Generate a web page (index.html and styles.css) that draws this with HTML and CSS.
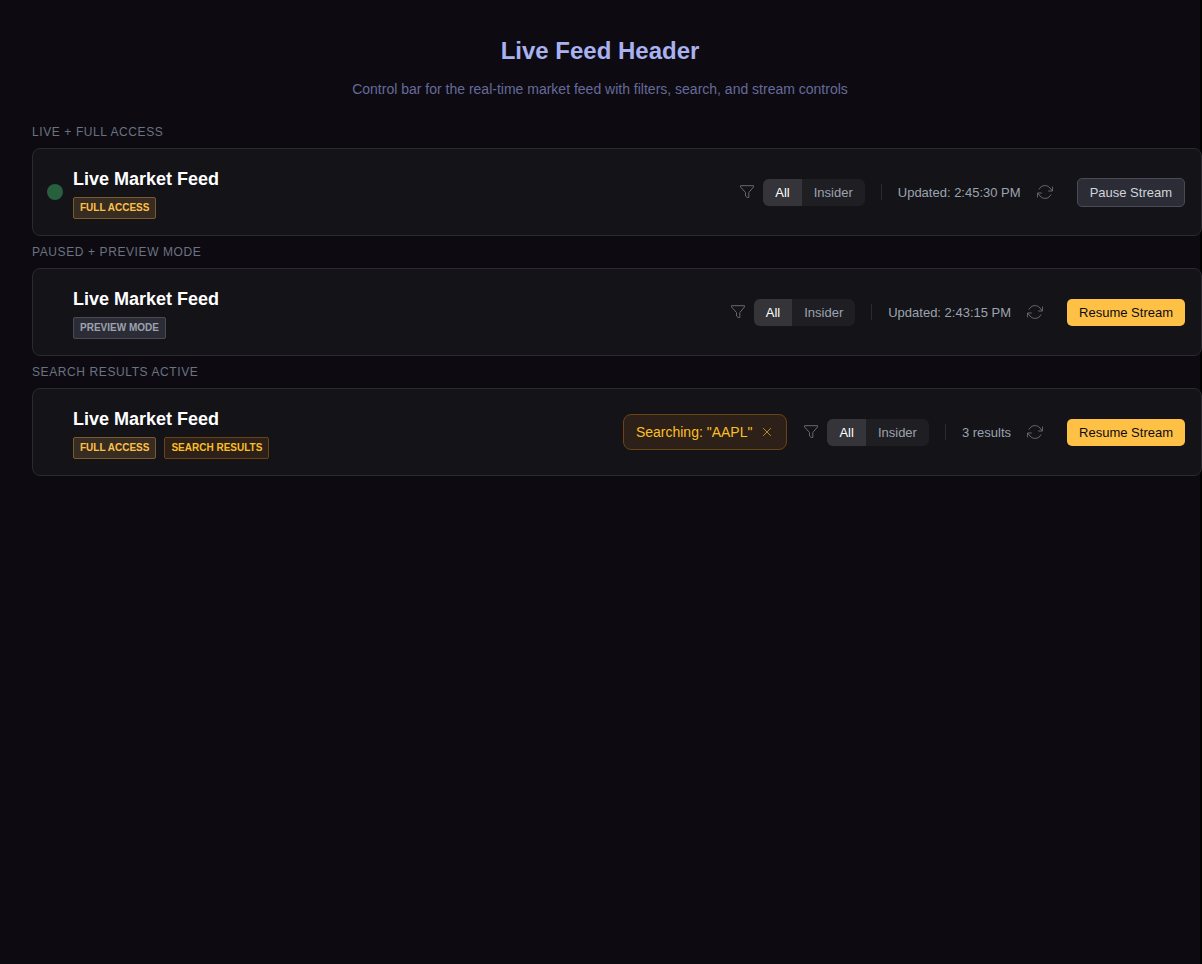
FILE: index.html
```html
<!DOCTYPE html>
<html lang="en">
<head>
    <meta charset="UTF-8">
    <meta name="viewport" content="width=device-width, initial-scale=1.0">
    <title>Live Feed Header</title>
    <link rel="stylesheet" href="styles.css">
</head>
<body>
    <!-- shared icons -->
    <svg class="icon-defs" aria-hidden="true">
        <symbol id="icon-filter" viewBox="0 0 16 16">
            <path d="M1.5 1.7h13v1.2L9.8 8.6v4.9H8.2L6.5 12V8.6L1.5 2.9z"/>
        </symbol>
        <symbol id="icon-refresh" viewBox="0 0 16 16">
            <path d="M2 5.5A6.5 6.5 0 0 1 13 4L15.5 7M15.6 2.6V7h-4.4M14 10.5A6.5 6.5 0 0 1 3 12L.5 9M.4 13.4V9h4.4"/>
        </symbol>
        <symbol id="icon-close" viewBox="0 0 16 16">
            <path d="M3.5 3.5l9 9M12.5 3.5l-9 9"/>
        </symbol>
    </svg>

    <div class="page">
        <header class="page-header">
            <h1>Live Feed Header</h1>
            <p>Control bar for the real-time market feed with filters, search, and stream controls</p>
        </header>

        <main>
            <section>
                <h2 class="variant-label">Live + Full Access</h2>
                <div class="feed-bar">
                    <div class="feed-info">
                        <span class="status-dot live"></span>
                        <div>
                            <h3>Live Market Feed</h3>
                            <div class="badges">
                                <span class="badge badge-full">Full Access</span>
                            </div>
                        </div>
                    </div>
                    <div class="controls">
                        <div class="filter">
                            <svg class="icon-filter"><use href="#icon-filter"/></svg>
                            <div class="toggle">
                                <button class="active">All</button>
                                <button>Insider</button>
                            </div>
                        </div>
                        <div class="status">
                            <span>Updated: 2:45:30 PM</span>
                        </div>
                        <button class="refresh" aria-label="Refresh"><svg><use href="#icon-refresh"/></svg></button>
                        <button class="stream-btn pause">Pause Stream</button>
                    </div>
                </div>
            </section>

            <section>
                <h2 class="variant-label">Paused + Preview Mode</h2>
                <div class="feed-bar">
                    <div class="feed-info">
                        <span class="status-dot"></span>
                        <div>
                            <h3>Live Market Feed</h3>
                            <div class="badges">
                                <span class="badge badge-preview">Preview Mode</span>
                            </div>
                        </div>
                    </div>
                    <div class="controls">
                        <div class="filter">
                            <svg class="icon-filter"><use href="#icon-filter"/></svg>
                            <div class="toggle">
                                <button class="active">All</button>
                                <button>Insider</button>
                            </div>
                        </div>
                        <div class="status">
                            <span>Updated: 2:43:15 PM</span>
                        </div>
                        <button class="refresh" aria-label="Refresh"><svg><use href="#icon-refresh"/></svg></button>
                        <button class="stream-btn resume">Resume Stream</button>
                    </div>
                </div>
            </section>

            <section>
                <h2 class="variant-label">Search Results Active</h2>
                <div class="feed-bar">
                    <div class="feed-info">
                        <span class="status-dot"></span>
                        <div>
                            <h3>Live Market Feed</h3>
                            <div class="badges">
                                <span class="badge badge-full">Full Access</span>
                                <span class="badge badge-search">Search Results</span>
                            </div>
                        </div>
                    </div>
                    <div class="controls">
                        <div class="search-chip">
                            <span>Searching: "AAPL"</span>
                            <button aria-label="Clear search"><svg><use href="#icon-close"/></svg></button>
                        </div>
                        <div class="filter">
                            <svg class="icon-filter"><use href="#icon-filter"/></svg>
                            <div class="toggle">
                                <button class="active">All</button>
                                <button>Insider</button>
                            </div>
                        </div>
                        <div class="status">
                            <span>3 results</span>
                        </div>
                        <button class="refresh" aria-label="Refresh"><svg><use href="#icon-refresh"/></svg></button>
                        <button class="stream-btn resume">Resume Stream</button>
                    </div>
                </div>
            </section>
        </main>
    </div>
</body>
</html>
```
FILE: styles.css
```css
* {
    box-sizing: border-box;
}
html {
    background-color: #000;
}
body {
    margin: 0;
    font-family: "Liberation Sans", Arial, sans-serif;
    color: #9ca3af;
}
h1, h2, h3, p {
    margin: 0;
}
button {
    font-family: inherit;
    border: none;
    cursor: pointer;
}
svg {
    display: block;
    fill: none;
    stroke: currentColor;
}
.icon-defs {
    display: none;
}
.page {
    min-height: 100vh;
    margin-right: 2px;
    padding: 32px 0 32px 32px;
    background-color: #0d0b11;
}
.page-header {
    margin: 0 32px 24px 0;
    text-align: center;
}
.page-header h1 {
    margin-bottom: 8px;
    font-size: 24px;
    line-height: 38px;
    color: #a9b1f0;
}
.page-header p {
    font-size: 14px;
    line-height: 22px;
    color: #666a9a;
}
/* bars run to the window edge */
main {
    margin-right: -2px;
}
.variant-label {
    padding-bottom: 8px;
    font-size: 12px;
    font-weight: normal;
    line-height: 16px;
    letter-spacing: 0.05em;
    text-transform: uppercase;
    color: #6b7280;
}
section + section {
    margin-top: 8px;
}
.feed-bar {
    display: flex;
    align-items: center;
    justify-content: space-between;
    padding: 16px;
    background-color: #141318;
    border: 1px solid #2a292e;
    border-radius: 8px;
}
.feed-info {
    display: flex;
    align-items: center;
    gap: 10px;
}
.feed-info h3 {
    margin-bottom: 4px;
    font-size: 18px;
    line-height: 28px;
    color: #fff;
}
.status-dot {
    width: 16px;
    height: 16px;
    margin-left: -2px;
    border-radius: 50%;
}
.status-dot.live {
    background-color: #285f3e;
}
.badges {
    display: flex;
    gap: 8px;
}
.badge {
    padding: 0 6px;
    border: 1px solid;
    border-radius: 2px;
    font-size: 10px;
    font-weight: bold;
    line-height: 20px;
    text-transform: uppercase;
}
.badge-full {
    color: #ffc145;
    background-color: #372c21;
    border-color: #7a5b29;
}
.badge-preview {
    color: #9ca3af;
    background-color: #2c2c36;
    border-color: #4a4b57;
}
.badge-search {
    color: #fbbf24;
    background-color: #2c2019;
    border-color: #6a4413;
}
.controls {
    display: flex;
    align-items: center;
    gap: 16px;
    font-size: 13px;
}
.filter {
    display: flex;
    align-items: center;
    gap: 8px;
}
.icon-filter {
    width: 16px;
    height: 16px;
    color: #666973;
}
.toggle {
    display: flex;
    overflow: hidden;
    border-radius: 6px;
    background-color: #1f1e23;
}
.toggle button {
    padding: 0 12px;
    font-size: 13px;
    line-height: 27px;
    color: #9ca3af;
    background: none;
}
.toggle .active {
    color: #fff;
    background-color: #353439;
}
.status {
    display: flex;
    align-items: center;
    gap: 16px;
}
.status::before {
    content: "";
    width: 1px;
    height: 16px;
    background-color: #2c2b30;
}
.refresh {
    margin-right: 8px;
    padding: 0;
    color: #666973;
    background: none;
}
.refresh svg {
    width: 16px;
    height: 16px;
}
.stream-btn {
    padding: 0 12px;
    border-radius: 5px;
    font-size: 13px;
    line-height: 27px;
}
.pause {
    color: #d1d5db;
    background-color: #2c2c36;
    border: 1px solid #4a4b57;
}
.resume {
    color: #0d0b11;
    background-color: #ffc145;
}
.search-chip {
    display: flex;
    align-items: center;
    gap: 8px;
    padding: 0 12px;
    border: 1px solid #6a4413;
    border-radius: 8px;
    background-color: #2c2019;
    color: #fbbf24;
    font-size: 14px;
    line-height: 34px;
}
.search-chip button {
    padding: 0;
    color: #c8952a;
    background: none;
}
.search-chip svg {
    width: 14px;
    height: 14px;
}
```
